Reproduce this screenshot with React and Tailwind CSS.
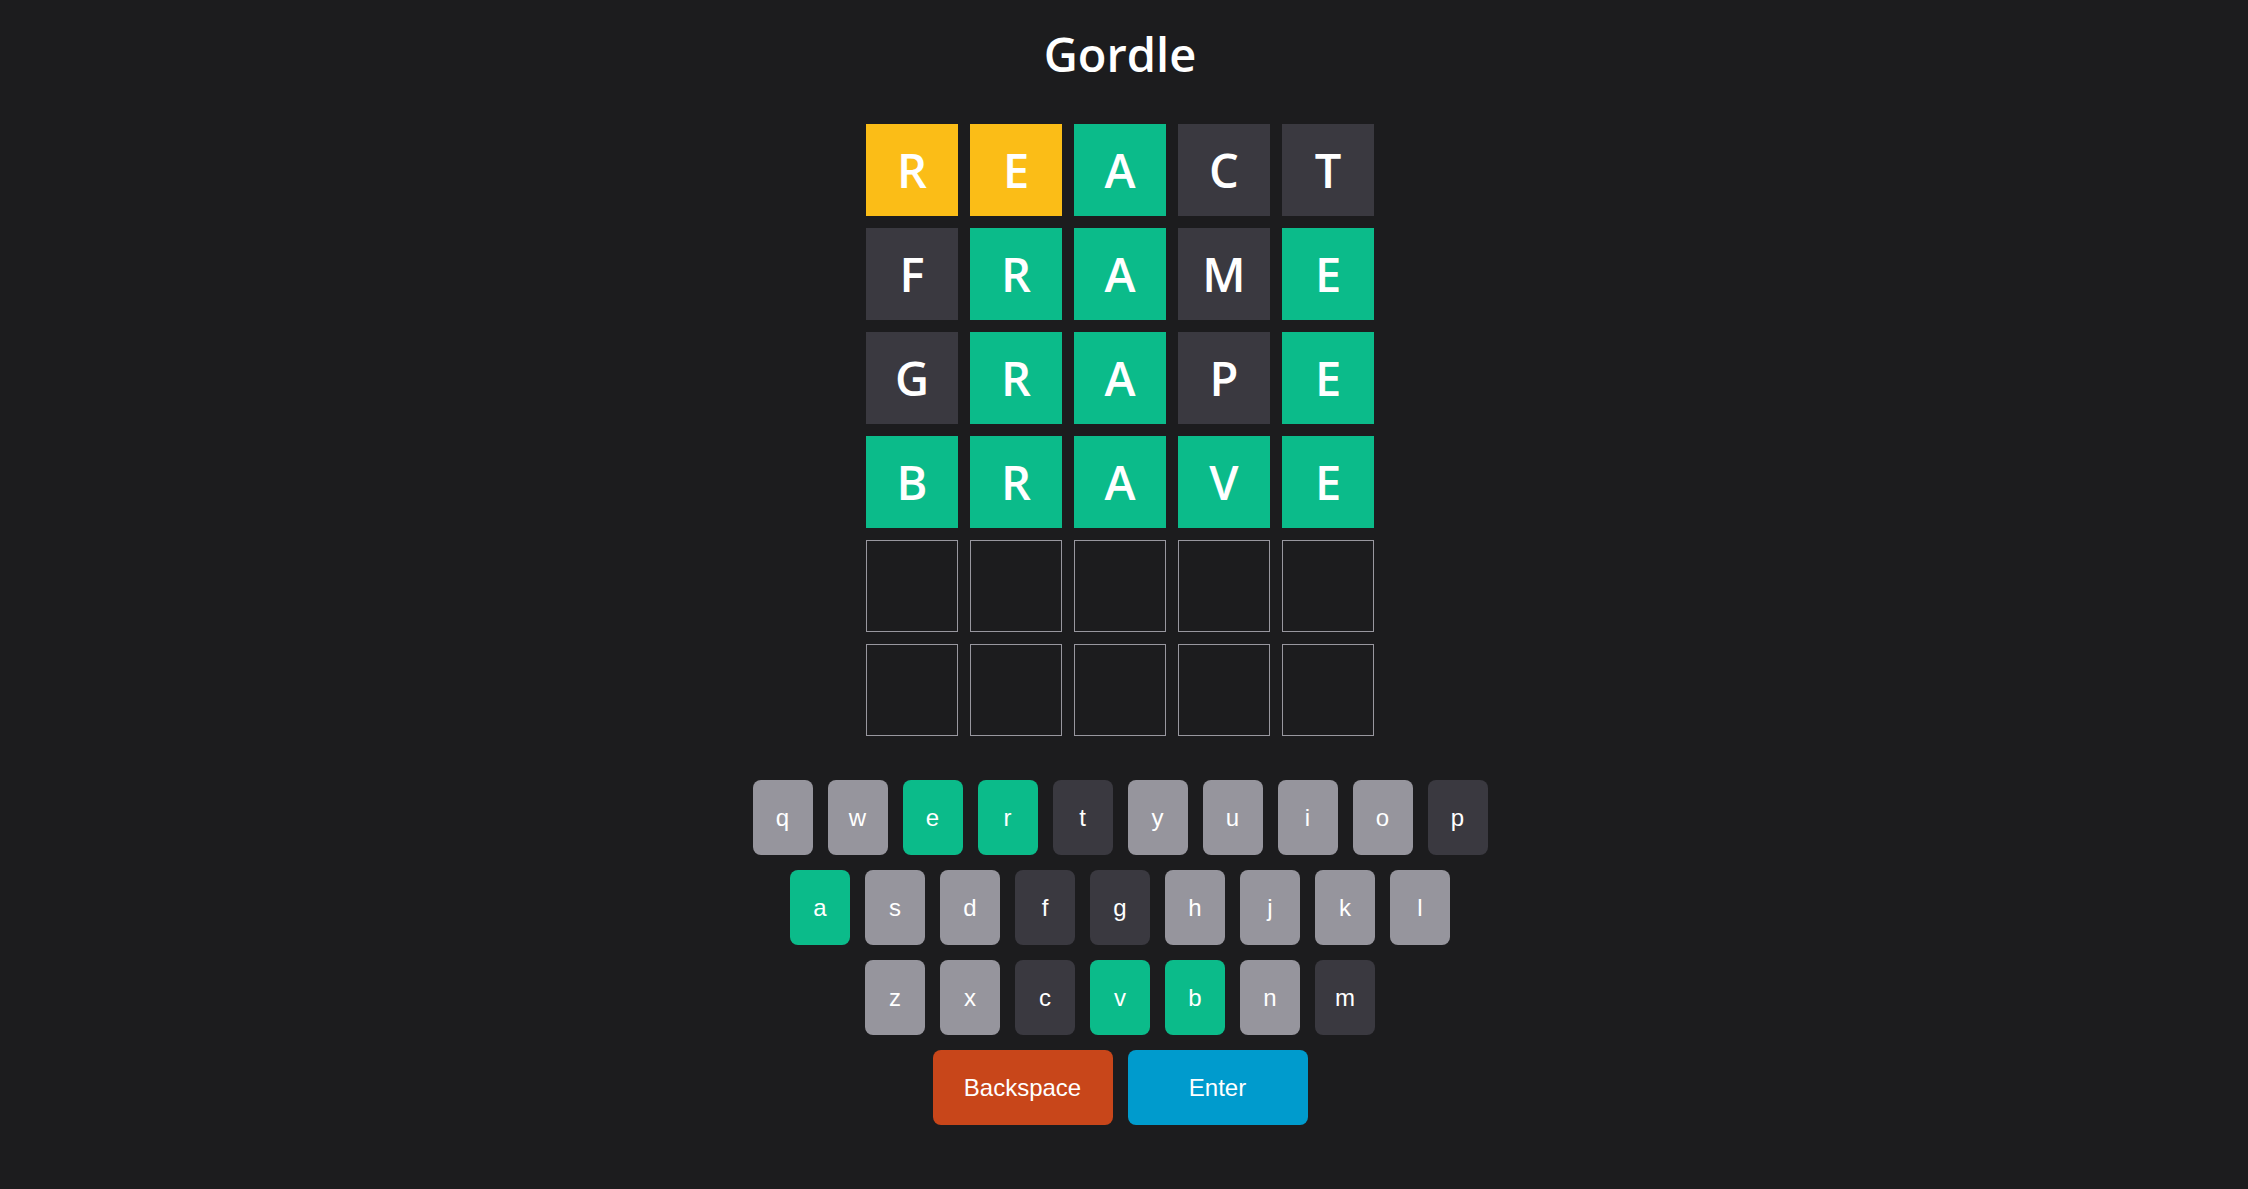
// Gordle board + on-screen keyboard

const guesses = [
  { word: 'REACT', marks: ['present', 'present', 'correct', 'absent', 'absent'] },
  { word: 'FRAME', marks: ['absent', 'correct', 'correct', 'absent', 'correct'] },
  { word: 'GRAPE', marks: ['absent', 'correct', 'correct', 'absent', 'correct'] },
  { word: 'BRAVE', marks: ['correct', 'correct', 'correct', 'correct', 'correct'] },
];

const tileColors = {
  present: 'bg-[#fbbd17]',
  correct: 'bg-[#0bbb8a]',
  absent: 'bg-[#3a3940]',
};

// keyboard state per letter
const keyState = {
  e: 'correct', r: 'correct', a: 'correct', v: 'correct', b: 'correct',
  t: 'absent', p: 'absent', f: 'absent', g: 'absent', c: 'absent', m: 'absent',
};

const keyColors = {
  correct: 'bg-[#0bbb8a]',
  absent: 'bg-[#3a3940]',
  unused: 'bg-[#96959d]',
};

const rows = ['qwertyuiop', 'asdfghjkl', 'zxcvbnm'];

function Tile({ letter, mark }) {
  if (!letter) {
    return <div className="w-[92px] h-[92px] border border-[#98979f]"></div>;
  }
  return (
    <div
      className={`w-[92px] h-[92px] flex items-center justify-center text-white text-[47px] font-semibold ${tileColors[mark]}`}
    >
      {letter}
    </div>
  );
}

function Key({ k }) {
  const state = keyState[k] || 'unused';
  return (
    <button
      className={`w-[60px] h-[75px] rounded-lg flex items-center justify-center text-white text-2xl font-['Liberation_Sans',Arial,sans-serif] ${keyColors[state]}`}
    >
      {k}
    </button>
  );
}

export default function App() {
  const board = [];
  for (let r = 0; r < 6; r++) {
    const g = guesses[r];
    board.push(
      <div key={r} className="flex gap-3">
        {[0, 1, 2, 3, 4].map((i) => (
          <Tile key={i} letter={g ? g.word[i] : null} mark={g ? g.marks[i] : null} />
        ))}
      </div>
    );
  }

  return (
    <div className="min-h-screen bg-[#1c1c1e] pr-2 flex flex-col items-center font-['Open_Sans',sans-serif]">
      <h1 className="mt-[30px] text-[47px] leading-[48px] font-semibold text-white">Gordle</h1>

      {/* board */}
      <div className="mt-[46px] flex flex-col gap-3">{board}</div>

      {/* keyboard */}
      <div className="mt-[44px] flex flex-col items-center gap-[15px]">
        {rows.map((row) => (
          <div key={row} className="flex gap-[15px]">
            {row.split('').map((k) => (
              <Key key={k} k={k} />
            ))}
          </div>
        ))}
        <div className="flex gap-[15px]">
          <button className="w-[180px] h-[75px] rounded-lg bg-[#c8461a] text-white text-2xl font-['Liberation_Sans',Arial,sans-serif]">
            Backspace
          </button>
          <button className="w-[180px] h-[75px] rounded-lg bg-[#009bcd] text-white text-2xl font-['Liberation_Sans',Arial,sans-serif]">
            Enter
          </button>
        </div>
      </div>
    </div>
  );
}
